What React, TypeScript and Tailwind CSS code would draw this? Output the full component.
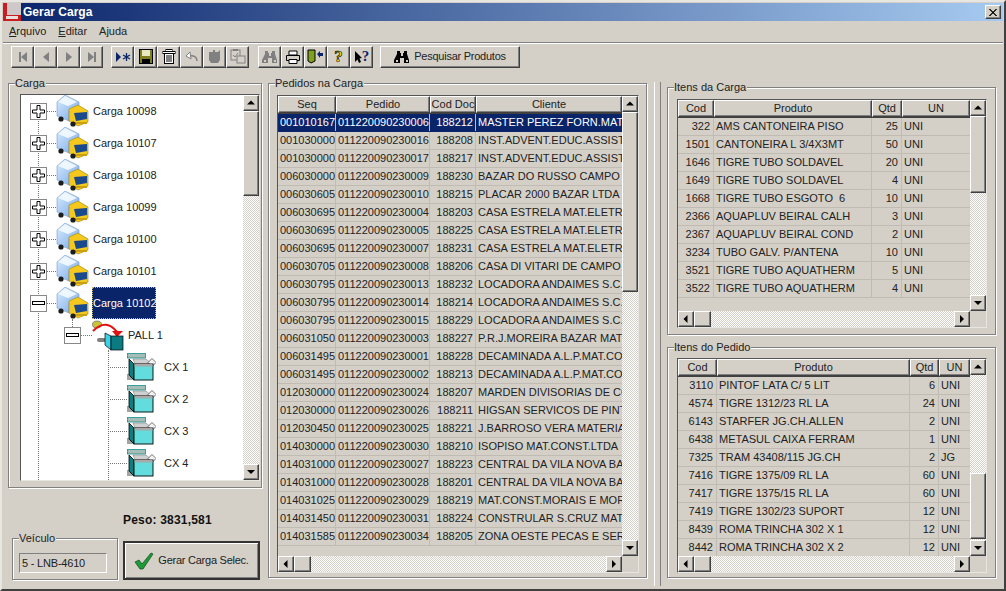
import type { ReactNode } from "react";
import clsx from "clsx";

const HATCH = "bg-[repeating-conic-gradient(#ffffff_0_25%,#d4d0c8_0_50%)] bg-[length:2px_2px]";
const RAISED = "bg-[#d4d0c8] border border-t-white border-l-white border-r-[#404040] border-b-[#404040] shadow-[inset_-1px_-1px_0_#808080]";
const SUNKEN = "border border-t-[#555555] border-l-[#555555] border-r-[#e8e6e1] border-b-[#e8e6e1]";
const LABEL = "text-[11px] text-[#222222]";

const pedidos = [
  ["001010167", "011220090230006", "188212", "MASTER PEREZ FORN.MAT"],
  ["001030000", "011220090230016", "188208", "INST.ADVENT.EDUC.ASSIST"],
  ["001030000", "011220090230017", "188217", "INST.ADVENT.EDUC.ASSIST"],
  ["006030000", "011220090230009", "188230", "BAZAR DO RUSSO CAMPO GRANDE"],
  ["006030605", "011220090230010", "188215", "PLACAR 2000 BAZAR LTDA"],
  ["006030695", "011220090230004", "188203", "CASA ESTRELA MAT.ELETRICO"],
  ["006030695", "011220090230005", "188225", "CASA ESTRELA MAT.ELETRICO"],
  ["006030695", "011220090230007", "188231", "CASA ESTRELA MAT.ELETRICO"],
  ["006030705", "011220090230008", "188206", "CASA DI VITARI DE CAMPO GRANDE"],
  ["006030795", "011220090230013", "188232", "LOCADORA ANDAIMES S.C.LTDA"],
  ["006030795", "011220090230014", "188214", "LOCADORA ANDAIMES S.C.LTDA"],
  ["006030795", "011220090230015", "188229", "LOCADORA ANDAIMES S.C.LTDA"],
  ["006031050", "011220090230003", "188227", "P.R.J.MOREIRA BAZAR MAT"],
  ["006031495", "011220090230001", "188228", "DECAMINADA A.L.P.MAT.CONST"],
  ["006031495", "011220090230002", "188213", "DECAMINADA A.L.P.MAT.CONST"],
  ["012030000", "011220090230024", "188207", "MARDEN DIVISORIAS DE CONST"],
  ["012030000", "011220090230026", "188211", "HIGSAN SERVICOS DE PINTURA"],
  ["012030450", "011220090230025", "188221", "J.BARROSO VERA MATERIAIS"],
  ["014030000", "011220090230030", "188210", "ISOPISO MAT.CONST.LTDA"],
  ["014031000", "011220090230027", "188223", "CENTRAL DA VILA NOVA BARRA"],
  ["014031000", "011220090230028", "188201", "CENTRAL DA VILA NOVA BARRA"],
  ["014031025", "011220090230029", "188219", "MAT.CONST.MORAIS E MORAIS"],
  ["014031450", "011220090230031", "188224", "CONSTRULAR S.CRUZ MAT"],
  ["014031585", "011220090230034", "188205", "ZONA OESTE PECAS E SERVICOS"],
];

const itensCarga = [
  ["322", "AMS CANTONEIRA PISO", "25", "UNI"],
  ["1501", "CANTONEIRA L 3/4X3MT", "50", "UNI"],
  ["1646", "TIGRE TUBO SOLDAVEL", "20", "UNI"],
  ["1649", "TIGRE TUBO SOLDAVEL", "4", "UNI"],
  ["1668", "TIGRE TUBO ESGOTO  6", "10", "UNI"],
  ["2366", "AQUAPLUV BEIRAL CALH", "3", "UNI"],
  ["2367", "AQUAPLUV BEIRAL COND", "2", "UNI"],
  ["3234", "TUBO GALV. P/ANTENA", "10", "UNI"],
  ["3521", "TIGRE TUBO AQUATHERM", "5", "UNI"],
  ["3522", "TIGRE TUBO AQUATHERM", "4", "UNI"],
];

const itensPedido = [
  ["3110", "PINTOF LATA C/ 5 LIT", "6", "UNI"],
  ["4574", "TIGRE 1312/23 RL LA", "24", "UNI"],
  ["6143", "STARFER JG.CH.ALLEN", "2", "UNI"],
  ["6438", "METASUL CAIXA FERRAM", "1", "UNI"],
  ["7325", "TRAM 43408/115 JG.CH", "2", "JG"],
  ["7416", "TIGRE 1375/09 RL LA", "60", "UNI"],
  ["7417", "TIGRE 1375/15 RL LA", "60", "UNI"],
  ["7419", "TIGRE 1302/23 SUPORT", "12", "UNI"],
  ["8439", "ROMA TRINCHA 302 X 1", "12", "UNI"],
  ["8442", "ROMA TRINCHA 302 X 2", "12", "UNI"],
];

function Arrow({ dir }: { dir: "up" | "down" | "left" | "right" }) {
  const points = { up: "4,1.5 8,5.5 0,5.5", down: "0,2 8,2 4,6", left: "5.5,0 5.5,8 1.5,4", right: "2,0 2,8 6,4" }[dir];
  return (
    <svg width="8" height="8" viewBox="0 0 8 8">
      <polygon points={points} fill="#000000" />
    </svg>
  );
}

function ScrollButton({ dir }: { dir: "up" | "down" | "left" | "right" }) {
  return (
    <div className={clsx(RAISED, "flex h-[16px] w-[16px] shrink-0 items-center justify-center")}>
      <Arrow dir={dir} />
    </div>
  );
}

function VScroll({ thumbTop, thumbHeight }: { thumbTop: number; thumbHeight: number }) {
  return (
    <div className={clsx(HATCH, "flex h-full w-[16px] shrink-0 flex-col")}>
      <ScrollButton dir="up" />
      <div className="min-h-0 flex-1">
        <div className={clsx(RAISED, "w-[16px]")} style={{ marginTop: thumbTop, height: thumbHeight }} />
      </div>
      <ScrollButton dir="down" />
    </div>
  );
}

function HScrollRow() {
  return (
    <div className="flex h-[16px] shrink-0">
      <div className={clsx(HATCH, "flex min-w-0 flex-1")}>
        <ScrollButton dir="left" />
        <div className="flex-1">
          <div className={clsx(RAISED, "h-[16px] w-[17px]")} />
        </div>
        <ScrollButton dir="right" />
      </div>
      <div className="w-[16px] shrink-0 bg-[#d4d0c8]" />
    </div>
  );
}

function GroupBox({ title, className, children }: { title: string; className?: string; children: ReactNode }) {
  return (
    <div className={clsx("relative border border-[#808080] shadow-[inset_1px_1px_0_#ffffff,1px_1px_0_#ffffff]", className)}>
      <span className={clsx(LABEL, "absolute left-[6px] top-[-7px] bg-[#d4d0c8] pr-[1px] leading-[13px]")}>{title}</span>
      {children}
    </div>
  );
}

function HeaderCell({ label, width }: { label: string; width: number }) {
  return (
    <div
      className={clsx(RAISED, LABEL, "flex h-[17px] shrink-0 items-center justify-center overflow-hidden whitespace-nowrap")}
      style={{ width }}
    >
      {label}
    </div>
  );
}

function ItemsGrid({
  rows,
  widths,
  thumbTop,
  thumbHeight,
  className,
}: {
  rows: string[][];
  widths: number[];
  thumbTop: number;
  thumbHeight: number;
  className: string;
}) {
  return (
    <div className={clsx(SUNKEN, "flex flex-col", className)}>
      <div className="flex min-h-0 flex-1">
        <div className="flex min-w-0 flex-1 flex-col">
          <div className="flex border-b border-[#404040]">
            <HeaderCell label="Cod" width={widths[0]} />
            <HeaderCell label="Produto" width={widths[1]} />
            <HeaderCell label="Qtd" width={widths[2]} />
            <HeaderCell label="UN" width={widths[3]} />
          </div>
          <div className="min-h-0 flex-1 overflow-hidden">
            {rows.map((row) => (
              <div key={row[0]} className={clsx(LABEL, "flex h-[18px] border-b border-[#c0bcb4] leading-[17px]")}>
                <div className="shrink-0 border-r border-[#c0bcb4] pr-[3px] text-right" style={{ width: widths[0] }}>{row[0]}</div>
                <div className="shrink-0 overflow-hidden whitespace-pre border-r border-[#c0bcb4] pl-[2px]" style={{ width: widths[1] }}>{row[1]}</div>
                <div className="shrink-0 border-r border-[#c0bcb4] pr-[3px] text-right" style={{ width: widths[2] }}>{row[2]}</div>
                <div className="shrink-0 pl-[2px]" style={{ width: widths[3] }}>{row[3]}</div>
              </div>
            ))}
          </div>
        </div>
        <VScroll thumbTop={thumbTop} thumbHeight={thumbHeight} />
      </div>
      <HScrollRow />
    </div>
  );
}

function Truck() {
  return (
    <svg width="33" height="32" viewBox="0 0 33 32" className="shrink-0">
      <defs>
        <linearGradient id="truckBox" x1="0" y1="0" x2="1" y2="1">
          <stop offset="0" stopColor="#dcecff" />
          <stop offset="1" stopColor="#76a8e6" />
        </linearGradient>
      </defs>
      <polygon points="1,7 9,0 23,7 23,12 13,16 13,26 1,21" fill="url(#truckBox)" stroke="#7399cc" strokeWidth="0.6" />
      <polygon points="2,7 9,1 21,7 12,11" fill="#eef6ff" />
      <polygon points="13,14 22,10 32,16 32,27 22,31 13,26" fill="#f5c81e" stroke="#9c8010" strokeWidth="0.6" />
      <polygon points="18,18 31,17 31,24 20,26" fill="#1b4a8c" />
      <rect x="19" y="27" width="12" height="2" fill="#c9a010" />
      <circle cx="5" cy="24" r="2.6" fill="#1c1c1c" />
      <circle cx="17" cy="29" r="2.6" fill="#1c1c1c" />
    </svg>
  );
}

function CxIcon() {
  return (
    <svg width="29" height="28" viewBox="0 0 29 28" className="shrink-0">
      <rect x="0" y="21" width="9" height="6" fill="#a4a4a4" />
      <rect x="0.5" y="0.5" width="18" height="4.5" fill="#a7bcb6" stroke="#12908c" strokeWidth="0.8" />
      <polygon points="6,6 19,6 25,11 8,11" fill="#cfcfcf" stroke="#777777" strokeWidth="0.5" />
      <polygon points="25,5.5 29,9.5 25,13.5 21,9.5" fill="#f4f4f4" stroke="#333333" strokeWidth="0.7" />
      <polygon points="2,6 7,11 7,27 2,22" fill="#0c7f7f" stroke="#000000" strokeWidth="0.8" />
      <rect x="7" y="11" width="19" height="16" fill="#62dcdc" stroke="#000000" strokeWidth="0.9" />
      <rect x="7.5" y="11" width="18" height="2.5" fill="#a9a9a9" />
    </svg>
  );
}

function PallIcon() {
  return (
    <svg width="32" height="31" viewBox="0 0 32 31" className="shrink-0">
      <ellipse cx="5" cy="4.5" rx="4.5" ry="3.5" fill="#c9c23a" stroke="#555555" strokeWidth="0.6" />
      <path d="M1 11 Q14 -2 25 12" fill="none" stroke="#e21212" strokeWidth="2.2" />
      <polygon points="20,11 31,11 25,17" fill="#e21212" />
      <rect x="5" y="18" width="9" height="4" rx="2" fill="#808080" />
      <polygon points="13,13 19,16 19,30 13,25" fill="#37d3ea" stroke="#000000" strokeWidth="0.7" />
      <rect x="19" y="16" width="12" height="14" fill="#0b7b82" stroke="#000000" strokeWidth="0.7" />
    </svg>
  );
}

function Expander({ open }: { open?: boolean }) {
  return (
    <div className="flex h-[17px] w-[17px] shrink-0 items-center justify-center border border-[#888888] bg-white">
      <svg width="13" height="13" viewBox="0 0 13 13">
        {open ? (
          <rect x="0.5" y="4.5" width="12" height="3" fill="#ffffff" stroke="#000000" />
        ) : (
          <polygon points="5,0.5 8,0.5 8,5 12.5,5 12.5,8 8,8 8,12.5 5,12.5 5,8 0.5,8 0.5,5 5,5" fill="#ffffff" stroke="#000000" />
        )}
      </svg>
    </div>
  );
}

function Dots({ width }: { width: number }) {
  return <div className="shrink-0 border-t border-dotted border-[#777777]" style={{ width }} />;
}

function CargaRow({ label, selected, open }: { label: string; selected?: boolean; open?: boolean }) {
  return (
    <div className="flex h-[32px] items-center pl-[9px]">
      <Expander open={open} />
      <Dots width={9} />
      <Truck />
      {selected ? (
        <span className="ml-[3px] flex h-[32px] w-[64px] items-center whitespace-nowrap border border-dotted border-[#c9b56a] bg-[#0a246a] text-[11px] text-white">{label}</span>
      ) : (
        <span className={clsx(LABEL, "ml-[4px]")}>{label}</span>
      )}
    </div>
  );
}

function CxRow({ label }: { label: string }) {
  return (
    <div className="flex h-[32px] items-center pl-[87px]">
      <Dots width={19} />
      <CxIcon />
      <span className={clsx(LABEL, "ml-[8px]")}>{label}</span>
    </div>
  );
}

function ToolButton({ children, wide }: { children: ReactNode; wide?: boolean }) {
  return (
    <div className={clsx(RAISED, "flex h-[22px] shrink-0 items-center justify-center", wide ? "w-[140px]" : "w-[23px]")}>
      {children}
    </div>
  );
}

function Binoculars({ color = "#000000" }: { color?: string }) {
  return (
    <svg width="16" height="14" viewBox="0 0 16 14">
      <path d="M3 1h3v2h1v3h2V3h1V1h3v3l2 6v3H10V8H6v5H0v-3l3-6z" fill={color} />
      <rect x="2" y="10" width="2" height="2" fill="#d4d0c8" />
      <rect x="12" y="10" width="2" height="2" fill="#d4d0c8" />
    </svg>
  );
}

function Toolbar() {
  return (
    <div className="mx-[1px] flex h-[28px] shrink-0 items-center border-t border-[#808080] pl-[8px] shadow-[inset_0_1px_0_#ffffff]">
      <ToolButton>
        <svg width="12" height="12" viewBox="0 0 12 12"><rect x="2" y="1" width="2" height="10" fill="#808080" /><polygon points="10,1 10,11 4,6" fill="#808080" /></svg>
      </ToolButton>
      <ToolButton>
        <svg width="12" height="12" viewBox="0 0 12 12"><polygon points="9,1 9,11 3,6" fill="#808080" /></svg>
      </ToolButton>
      <ToolButton>
        <svg width="12" height="12" viewBox="0 0 12 12"><polygon points="3,1 3,11 9,6" fill="#808080" /></svg>
      </ToolButton>
      <ToolButton>
        <svg width="12" height="12" viewBox="0 0 12 12"><polygon points="2,1 2,11 8,6" fill="#808080" /><rect x="8" y="1" width="2" height="10" fill="#808080" /></svg>
      </ToolButton>
      <div className="w-[8px] shrink-0" />
      <ToolButton>
        <svg width="16" height="12" viewBox="0 0 16 12"><polygon points="1,1 1,11 6,6" fill="#0a246a" /><path d="M11.5 2v8M8 4l7 4M15 4l-7 4" stroke="#0a246a" strokeWidth="1.3" /></svg>
      </ToolButton>
      <ToolButton>
        <svg width="14" height="15" viewBox="0 0 14 15"><rect x="0.5" y="0.5" width="13" height="14" fill="#7f7f20" stroke="#000000" /><rect x="3" y="1" width="8" height="6" fill="#e9e9c0" /><rect x="3" y="10" width="8" height="4" fill="#000000" /></svg>
      </ToolButton>
      <ToolButton>
        <svg width="14" height="15" viewBox="0 0 14 15"><rect x="4" y="0.5" width="6" height="2" fill="#ffffff" stroke="#000000" /><rect x="1" y="2.5" width="12" height="2" fill="#ffffff" stroke="#000000" /><rect x="2.5" y="4.5" width="9" height="10" fill="#ffffff" stroke="#000000" /><path d="M5 6v7M7 6v7M9 6v7" stroke="#000000" /></svg>
      </ToolButton>
      <ToolButton>
        <svg width="14" height="12" viewBox="0 0 14 12"><path d="M12 10c0-4-3-6-8-5" fill="none" stroke="#808080" strokeWidth="1.5" /><polygon points="5,1 1,5 6,8" fill="#ffffff" stroke="#808080" /></svg>
      </ToolButton>
      <ToolButton>
        <svg width="14" height="15" viewBox="0 0 14 15"><path d="M2 3h3V1h2v2h3l2-2v10l-2 3H3l-2-3V3z" fill="#808080" /></svg>
      </ToolButton>
      <ToolButton>
        <svg width="16" height="15" viewBox="0 0 16 15"><rect x="1" y="1" width="9" height="10" fill="#d4d0c8" stroke="#808080" /><rect x="3" y="0" width="5" height="2" fill="#808080" /><rect x="7" y="7" width="8" height="7" fill="#d4d0c8" stroke="#808080" /><path d="M3 6l2 2 3-4" fill="none" stroke="#808080" /></svg>
      </ToolButton>
      <div className="w-[9px] shrink-0" />
      <ToolButton>
        <Binoculars color="#808080" />
      </ToolButton>
      <ToolButton>
        <svg width="16" height="14" viewBox="0 0 16 14"><path d="M4 1h8v4H4z" fill="#ffffff" stroke="#000000" /><path d="M1.5 5.5h13v5h-13z" fill="#d4d0c8" stroke="#000000" /><path d="M4 9.5h8v4H4z" fill="#ffffff" stroke="#000000" /></svg>
      </ToolButton>
      <ToolButton>
        <svg width="17" height="15" viewBox="0 0 17 15"><polygon points="1,1 8,1 8,12 4,14 1,12" fill="#7f9f20" stroke="#000000" /><polygon points="10,5 13,2 13,4 16,4 16,7 13,7 13,9" fill="#0a246a" /></svg>
      </ToolButton>
      <ToolButton>
        <span className="font-['Liberation_Serif',serif] text-[17px] font-bold leading-none text-[#e8e000] [-webkit-text-stroke:0.6px_#000000]">?</span>
      </ToolButton>
      <ToolButton>
        <div className="flex items-center">
          <svg width="8" height="14" viewBox="0 0 8 14"><polygon points="1,1 1,12 3.5,9.5 5,13 7,12 5.5,8.5 8,8" fill="#000000" /></svg>
          <span className="font-['Liberation_Serif',serif] text-[15px] font-bold leading-none text-[#0a246a]">?</span>
        </div>
      </ToolButton>
      <div className="w-[7px] shrink-0" />
      <ToolButton wide>
        <Binoculars />
        <span className={clsx(LABEL, "ml-[4px] tracking-[-0.25px]")}>Pesquisar Produtos</span>
      </ToolButton>
    </div>
  );
}

export default function App() {
  return (
    <div className="flex h-[591px] w-[1006px] flex-col overflow-hidden border-2 border-t-[#e8e6e1] border-l-[#e8e6e1] border-r-[#404040] border-b-[#404040] bg-[#d4d0c8] font-['Liberation_Sans',Arial,sans-serif]">
      {/* title bar */}
      <div className="mx-[1px] mt-[1px] flex h-[18px] shrink-0 items-center bg-[linear-gradient(to_right,#0a246a,#a6caf0)] pr-[2px]">
        <svg width="18" height="18" viewBox="0 0 18 18" className="shrink-0">
          <rect width="18" height="18" fill="#c81e22" />
          <rect x="4" y="0" width="14" height="12" fill="#cfc8c8" />
          <rect x="3" y="13" width="12" height="3" fill="#e8e0dc" />
        </svg>
        <span className="ml-[2px] text-[12px] font-bold text-white">Gerar Carga</span>
        <div className={clsx(RAISED, "ml-auto flex h-[14px] w-[16px] items-center justify-center")}>
          <svg width="8" height="7" viewBox="0 0 8 7"><path d="M0 0l7 7M1 0l7 7M7 0L0 7M8 0L1 7" stroke="#000000" strokeWidth="0.8" /></svg>
        </div>
      </div>

      {/* menu */}
      <div className={clsx(LABEL, "flex h-[21px] shrink-0 items-center gap-[12px] pl-[7px]")}>
        <span><u>A</u>rquivo</span>
        <span><u>E</u>ditar</span>
        <span>A<u>j</u>uda</span>
      </div>

      <Toolbar />

      <div className="flex min-h-0 flex-1 pl-[6px] pt-[13px]">
        {/* left column */}
        <div className="flex w-[254px] shrink-0 flex-col">
          <GroupBox title="Carga" className="h-[405px] pb-[6px] pl-[11px] pr-[1px] pt-[10px]">
            <div className={clsx(SUNKEN, "flex h-full bg-white")}>
              <div className="relative min-w-0 flex-1 overflow-hidden">
                <div className="absolute bottom-0 left-[17px] top-[16px] border-l border-dotted border-[#777777]" />
                <div className="absolute left-[51px] top-[224px] h-[8px] border-l border-dotted border-[#777777]" />
                <div className="absolute bottom-0 left-[87px] top-[255px] border-l border-dotted border-[#777777]" />
                <div className="relative">
                  {["10098", "10107", "10108", "10099", "10100", "10101"].map((code) => (
                    <CargaRow key={code} label={`Carga ${code}`} />
                  ))}
                  <CargaRow label="Carga 10102" open selected />
                  <div className="flex h-[32px] items-center pl-[43px]">
                    <Expander open />
                    <Dots width={11} />
                    <PallIcon />
                    <span className={clsx(LABEL, "ml-[4px]")}>PALL 1</span>
                  </div>
                  <CxRow label="CX 1" />
                  <CxRow label="CX 2" />
                  <CxRow label="CX 3" />
                  <CxRow label="CX 4" />
                </div>
              </div>
              <VScroll thumbTop={0} thumbHeight={85} />
            </div>
          </GroupBox>

          <div className="ml-[115px] mt-[24px] h-[16px] text-[12px] font-bold leading-[16px] tracking-[0.2px] text-[#111111]">Peso: 3831,581</div>

          <div className="mt-[1px] flex items-start pl-[4px]">
            <GroupBox title="Veículo" className="mt-[9px] h-[42px] w-[106px] pl-[6px] pt-[14px]">
              <div className={clsx(LABEL, "flex h-[20px] w-[88px] items-center border border-t-[#808080] border-l-[#808080] border-r-white border-b-white pl-[2px] tracking-[-0.2px]")}>
                5 - LNB-4610
              </div>
            </GroupBox>
            <div className="ml-[5px] mt-[12px] flex h-[39px] w-[137px] items-center justify-center border-2 border-[#333333] bg-[#d4d0c8] shadow-[inset_1px_1px_0_#ffffff,inset_-1px_-1px_0_#808080]">
              <svg width="20" height="18" viewBox="0 0 20 18">
                <path d="M1 10l4-2 3 4L17 1l2 1L9 17H6z" fill="#1f9a36" stroke="#0b4a1a" strokeWidth="0.7" />
              </svg>
              <span className={clsx(LABEL, "ml-[4px] tracking-[-0.25px]")}>Gerar Carga Selec.</span>
            </div>
          </div>
        </div>

        {/* middle column */}
        <GroupBox title="Pedidos na Carga" className="ml-[6px] h-[495px] w-[379px] shrink-0 pl-[8px] pr-[7px] pt-[11px]">
          <div className={clsx(SUNKEN, "flex h-[478px] flex-col")}>
            <div className="flex min-h-0 flex-1">
              <div className="flex min-w-0 flex-1 flex-col">
                <div className="flex border-b border-[#404040]">
                  <HeaderCell label="Seq" width={58} />
                  <HeaderCell label="Pedido" width={94} />
                  <HeaderCell label="Cod Doc" width={46} />
                  <HeaderCell label="Cliente" width={146} />
                </div>
                <div className="min-h-0 flex-1 overflow-hidden">
                  {pedidos.map((row, index) => (
                    <div
                      key={row[1]}
                      className={clsx(
                        "flex h-[18px] whitespace-nowrap border-b text-[11px] leading-[17px]",
                        index === 0 ? "border-[#0a246a] bg-[#0a246a] text-white" : "border-[#c0bcb4] text-[#222222]",
                      )}
                    >
                      <div className="w-[58px] shrink-0 overflow-hidden border-r border-[#c0bcb4] pl-[2px]">{row[0]}</div>
                      <div className="w-[94px] shrink-0 overflow-hidden border-r border-[#c0bcb4] pl-[2px]">{row[1]}</div>
                      <div className="w-[46px] shrink-0 border-r border-[#c0bcb4] pr-[2px] text-right">{row[2]}</div>
                      <div className="w-[146px] shrink-0 overflow-hidden pl-[2px]">{row[3]}</div>
                    </div>
                  ))}
                </div>
              </div>
              <VScroll thumbTop={0} thumbHeight={180} />
            </div>
            <HScrollRow />
          </div>
        </GroupBox>

        {/* splitter */}
        <div className="ml-[7px] mt-[-1px] h-[504px] w-[7px] shrink-0 border-x border-l-white border-r-[#808080]" />

        {/* right column */}
        <div className="ml-[6px] flex w-[329px] shrink-0 flex-col pt-[4px]">
          <GroupBox title="Itens da Carga" className="h-[248px] pl-[9px] pr-[8px] pt-[11px]">
            <ItemsGrid rows={itensCarga} widths={[36, 158, 30, 68]} thumbTop={0} thumbHeight={77} className="h-[229px] w-[310px]" />
          </GroupBox>
          <GroupBox title="Itens do Pedido" className="mt-[12px] h-[231px] pl-[9px] pr-[8px] pt-[10px]">
            <ItemsGrid rows={itensPedido} widths={[39, 193, 29, 31]} thumbTop={98} thumbHeight={66} className="h-[215px] w-[310px]" />
          </GroupBox>
        </div>
      </div>
    </div>
  );
}
